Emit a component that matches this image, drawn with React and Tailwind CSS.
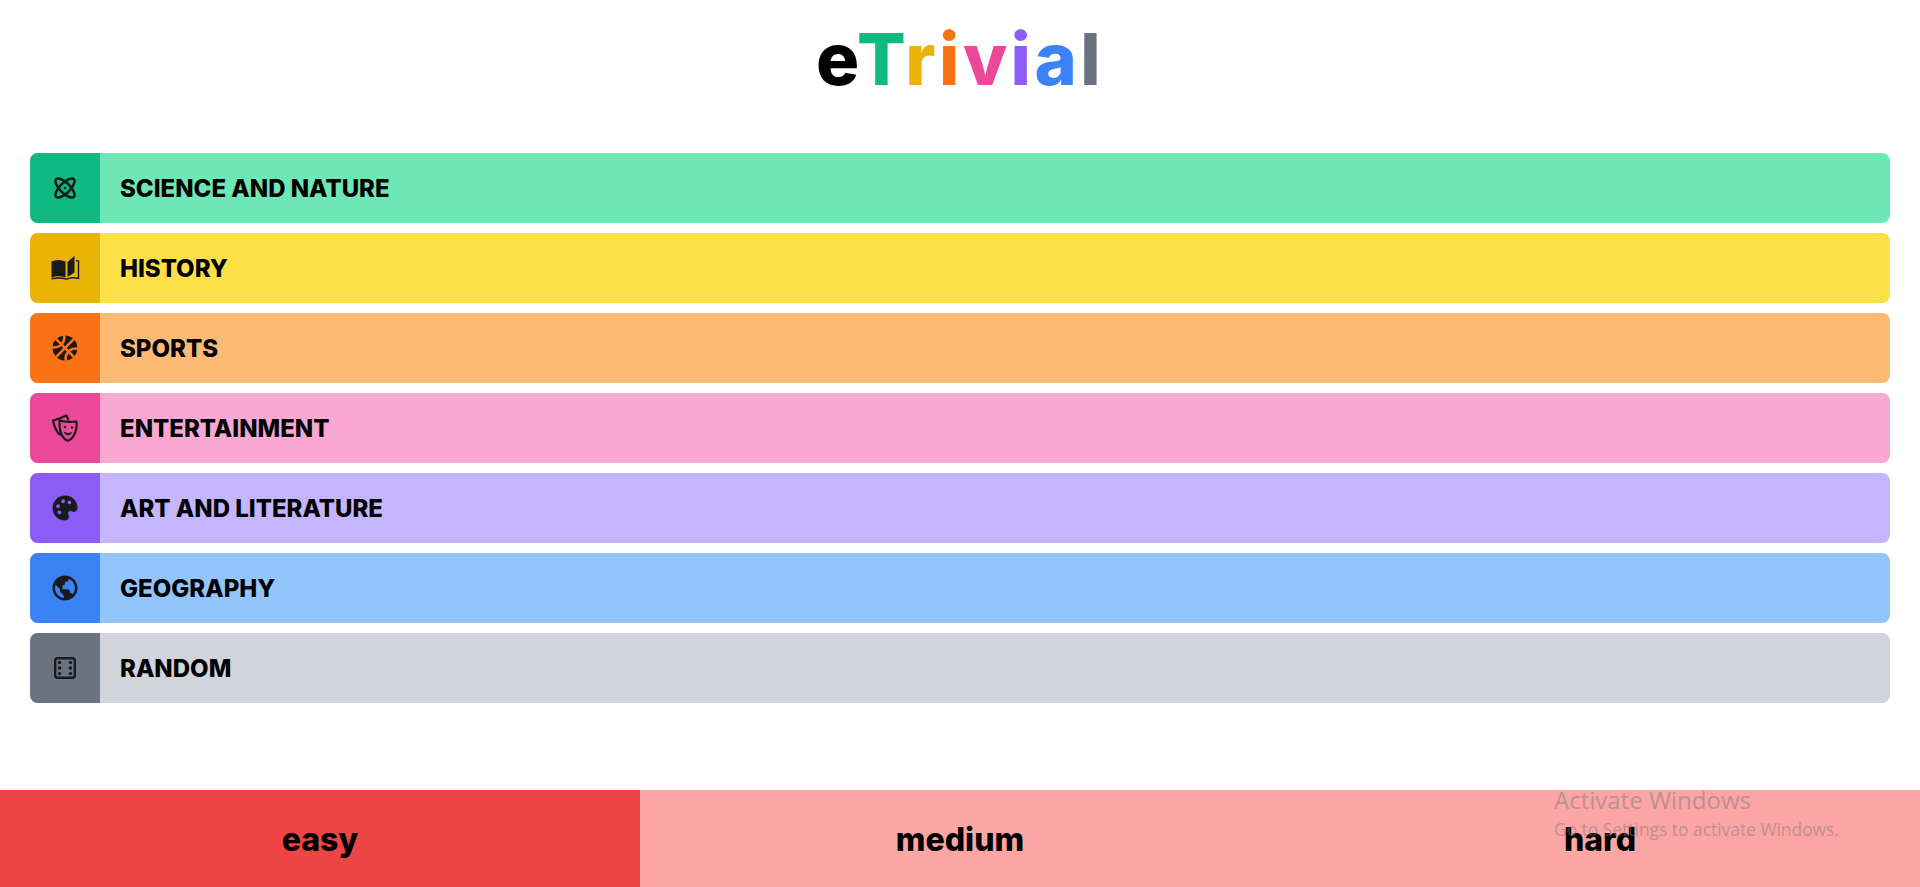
// 分类选择页：标题、分类列表与底部难度切换。
import { BiSolidBasketball, BiSolidPalette, BiWorld } from 'react-icons/bi';
import { TbAtom } from 'react-icons/tb';

function MasksIcon() {
  return (
    <svg width="30" height="30" viewBox="0 0 30 30" fill="none" stroke="currentColor" strokeWidth="2.2" strokeLinecap="round" strokeLinejoin="round">
      <path d="M10 21.5C6.5 19.5 4.5 14 3 7.5C7.5 6.5 12 4.5 16.5 2.5C17.2 3.5 17.7 4.8 18 6.5" />
      <path d="M9.5 7.5C14.5 9 20 9.3 26.5 8.5C27 14 26 19 23.5 23C22 25.5 20 27.3 18 27.8C15.5 27 13 24.5 11.5 21.5C10 18 9.3 12.5 9.5 7.5Z" />
      <circle cx="15" cy="14" r="1.2" fill="currentColor" stroke="none" />
      <circle cx="22" cy="14.5" r="1.2" fill="currentColor" stroke="none" />
      <path d="M14.5 19.5C16.5 21 19.5 21 21.5 19.5C20.5 22.5 15.5 22.5 14.5 19.5Z" fill="currentColor" strokeWidth="1" />
    </svg>
  );
}

function BookIcon() {
  return (
    <svg width="30" height="30" viewBox="0 0 30 30" fill="currentColor">
      <path d="M1.5 8.5C6 6.5 11 6.5 15.5 8.5V24.5C11 22.8 6 22.8 1.5 24.5Z" />
      <path d="M17.5 9L24.5 3V19.5L17.5 24Z" />
      <path d="M26 7.5L28.5 8V25.3C24 24.3 19.5 24.8 16.5 26.2C12 24.8 6 24.8 1.5 25.8" fill="none" stroke="currentColor" strokeWidth="1.4" />
    </svg>
  );
}

function DiceIcon() {
  return (
    <svg width="30" height="30" viewBox="0 0 30 30" fill="currentColor">
      <rect x="5.2" y="5.2" width="19.6" height="19.6" rx="2.5" fill="none" stroke="currentColor" strokeWidth="2.4" />
      <circle cx="9.6" cy="9.4" r="1.7" />
      <circle cx="20.4" cy="9.4" r="1.7" />
      <circle cx="9.6" cy="15" r="1.7" />
      <circle cx="20.4" cy="15" r="1.7" />
      <circle cx="9.6" cy="20.6" r="1.7" />
      <circle cx="20.4" cy="20.6" r="1.7" />
    </svg>
  );
}

const categories = [
  { name: 'SCIENCE AND NATURE', Icon: TbAtom, iconBg: 'bg-[#10b981]', rowBg: 'bg-[#6ee7b7]' },
  { name: 'HISTORY', Icon: BookIcon, iconBg: 'bg-[#eab308]', rowBg: 'bg-[#fde047]' },
  { name: 'SPORTS', Icon: BiSolidBasketball, iconBg: 'bg-[#f97316]', rowBg: 'bg-[#fdba74]' },
  { name: 'ENTERTAINMENT', Icon: MasksIcon, iconBg: 'bg-[#ec4899]', rowBg: 'bg-[#f9a8d4]' },
  { name: 'ART AND LITERATURE', Icon: BiSolidPalette, iconBg: 'bg-[#8b5cf6]', rowBg: 'bg-[#c4b5fd]' },
  { name: 'GEOGRAPHY', Icon: BiWorld, iconBg: 'bg-[#3b82f6]', rowBg: 'bg-[#93c5fd]' },
  { name: 'RANDOM', Icon: DiceIcon, iconBg: 'bg-[#6b7280]', rowBg: 'bg-[#d1d5db]' }
];

const titleLetters = [
  ['e', 'text-black'],
  ['T', 'text-[#10b981]'],
  ['r', 'text-[#eab308]'],
  ['i', 'text-[#f97316]'],
  ['v', 'text-[#ec4899]'],
  ['i', 'text-[#8b5cf6]'],
  ['a', 'text-[#3b82f6]'],
  ['l', 'text-[#6b7280]']
];

const difficulties = ['easy', 'medium', 'hard'];

export default function App() {
  return (
    <div className="relative flex min-h-screen flex-col bg-white font-['Inter','Liberation_Sans',sans-serif] text-black">
      <header className="flex h-[153px] justify-center pt-[8px]">
        <h1 className="text-[72px] font-extrabold leading-[102px] tracking-[3.4px]">
          {titleLetters.map(([letter, color], index) => (
            <span key={index} className={color}>{letter}</span>
          ))}
        </h1>
      </header>

      <ul className="flex flex-col gap-[10px] px-[30px]">
        {categories.map(({ name, Icon, iconBg, rowBg }) => (
          <li key={name} className={`flex h-[70px] items-center overflow-hidden rounded-lg ${rowBg}`}>
            <span className={`flex h-full w-[70px] items-center justify-center text-[#1a1a1a] ${iconBg}`}>
              <Icon size={30} />
            </span>
            <span className="pl-5 pt-[2px] text-2xl font-extrabold">{name}</span>
          </li>
        ))}
      </ul>

      <div className="mt-auto grid h-[97px] grid-cols-3">
        {difficulties.map((level, index) => (
          <button
            key={level}
            type="button"
            className={`pt-[2px] text-[32px] font-extrabold ${index === 0 ? 'bg-[#ef4444]' : 'bg-[#fca5a5]'}`}
          >
            {level}
          </button>
        ))}
      </div>

      {/* Windows 激活水印，盖在底部栏上。 */}
      <div className="pointer-events-none absolute left-[1554px] top-[784px] font-['Open_Sans',sans-serif] text-[#7a7a7a]/50">
        <p className="text-[24px] leading-[32px]">Activate Windows</p>
        <p className="text-[17.4px] leading-[26px]">Go to Settings to activate Windows.</p>
      </div>
    </div>
  );
}
